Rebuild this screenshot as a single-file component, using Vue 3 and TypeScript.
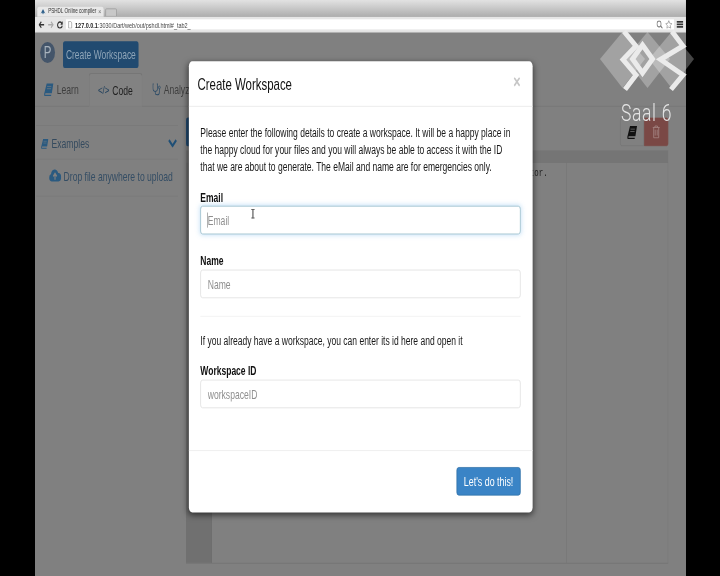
<script setup lang="ts">
const tabs = [
  { label: 'Learn', icon: 'book', active: false },
  { label: 'Code', icon: 'code', active: true },
  { label: 'Analyze', icon: 'steth', active: false },
]
</script>

<template>
  <div class="stage">
    <div class="screen">
      <header class="chrome">
        <div class="tabbar">
          <div class="tab">
            <svg class="favicon" viewBox="0 0 12 12"><path d="M1 9 6 2l5 7-3-2-2 3-2-3z" fill="#2d5f8a" /></svg>
            <span class="tab-title">PSHDL Online compiler</span>
            <span class="tab-close">×</span>
          </div>
          <div class="tab-new"></div>
        </div>
        <div class="toolbar">
          <svg class="nav-icon" viewBox="0 0 12 10"><path d="M11 5H2M5.500 1 1.500 5l4 4" fill="none" stroke="#333" stroke-width="2" /></svg>
          <svg class="nav-icon" viewBox="0 0 12 10"><path d="M1 5h9M6.500 1l4 4-4 4" fill="none" stroke="#aaa" stroke-width="2" /></svg>
          <svg class="nav-icon" viewBox="0 0 12 10"><path d="M10 3.500A4.500 4 0 1 0 10.500 6" fill="none" stroke="#333" stroke-width="2" /><path d="M11.500 0v5H7z" fill="#333" /></svg>
          <div class="urlbar">
            <svg class="page-icon" viewBox="0 0 8 10"><path d="M1 .5h4l2 2v7H1z" fill="#fff" stroke="#888" /></svg>
            <span class="url"><b>127.0.0.1</b>:3030/Dart/web/out/pshdl.html#_tab2_</span>
            <svg class="url-tool" viewBox="0 0 12 10"><circle cx="5" cy="4.500" r="3.500" fill="none" stroke="#777" stroke-width="1.200" /><path d="m8 7 3 3" stroke="#777" stroke-width="1.500" /></svg>
            <svg class="url-tool" viewBox="0 0 12 10"><path d="m6 .5 1.600 3.200 3.900.4-2.900 2.300.8 3.400L6 8.100 2.600 9.800l.8-3.400L.5 4.100l3.900-.4z" fill="#fff" stroke="#777" stroke-width=".8" /></svg>
          </div>
          <div class="menu-btn"><i></i><i></i><i></i></div>
        </div>
      </header>

      <main class="page">
        <div class="topline">
          <div class="avatar">P</div>
          <div class="primary-dim">Create Workspace</div>
        </div>

        <nav class="tabs">
          <div v-for="t in tabs" :key="t.label" class="nav-tab" :class="{ active: t.active }">
            <svg v-if="t.icon === 'book'" class="icon-book" viewBox="0 0 20 18"><path d="M6 1h13l-3 13H3.500L3 16h12l-.5 1.500H1.500L1 15z" fill="#2a5a80" /><path d="M7 5h8M6.500 8h8" stroke="#808080" /></svg>
            <span v-if="t.icon === 'code'" class="code-glyph">&lt;/&gt;</span>
            <svg v-if="t.icon === 'steth'" class="icon-steth" viewBox="0 0 20 18"><path d="M3 1H1.500v6c0 3 2.500 5 5 5s5-2 5-5V1H10M6.500 12v2c0 2 2 3 4 3s5-1 5-4V8" fill="none" stroke="#2a4a66" stroke-width="1.500" /><circle cx="15.500" cy="6" r="2" fill="none" stroke="#2a4a66" stroke-width="1.300" /></svg>
            <span>{{ t.label }}</span>
          </div>
        </nav>

        <div class="columns">
          <aside class="side">
            <div class="side-head">
              <svg class="icon-book small" viewBox="0 0 20 18"><path d="M6 1h13l-3 13H3.500L3 16h12l-.5 1.500H1.500L1 15z" fill="#2a5a80" /><path d="M7 5h8M6.500 8h8" stroke="#808080" /></svg>
              <span class="side-title">Examples</span>
              <svg class="chevron" viewBox="0 0 16 10"><path d="M2 1.500 8 8l6-6.500" fill="none" stroke="#1f4f76" stroke-width="3" /></svg>
            </div>
            <div class="side-row">
              <svg class="cloud" viewBox="0 0 22 16"><path d="M5 15a4.500 4.500 0 0 1-1-8.800A6.500 6.500 0 0 1 16.500 5 5 5 0 0 1 17 15z" fill="#2a5a80" /><path d="M11 13V7M8 9l3-3.500L14 9" fill="none" stroke="#808080" stroke-width="2" /></svg>
              <span>Drop file anywhere to upload</span>
            </div>
          </aside>

          <section class="editor">
            <div class="editor-tools">
              <div class="tool-sliver"></div>
              <div class="tool-group">
                <div class="tool-btn">
                  <svg class="tool-book" viewBox="0 0 20 18"><path d="M6 1h13l-3 13H3.500L3 16h12l-.5 1.500H1.500L1 15z" fill="#111" /><path d="M7 5h8M6.500 8h8" stroke="#808080" /></svg>
                </div>
                <div class="tool-btn danger">
                  <svg class="tool-trash" viewBox="0 0 16 18"><path d="M1 3h14M5.500 3V1h5v2M3 3v14h10V3M6 6v8M10 6v8" fill="none" stroke="#a88a88" stroke-width="1.200" /></svg>
                </div>
              </div>
            </div>
            <div class="code-panel">
              <div class="code-head"></div>
              <div class="code-body">
                <div class="gutter"></div>
                <div class="code-text"><span>tor.</span></div>
                <div class="margin-col"></div>
              </div>
            </div>
          </section>
        </div>
      </main>

      <div class="modal">
        <div class="modal-head">
          <h4>Create Workspace</h4>
          <span class="close">×</span>
        </div>
        <div class="modal-body">
          <p class="intro">Please enter the following details to create a workspace. It will be a happy place in the happy cloud for your files and you will always be able to access it with the ID that we are about to generate. The eMail and name are for emergencies only.</p>
          <label class="field first">
            <span>Email</span>
            <span class="input-wrap">
              <input class="focused" placeholder="Email" />
              <i class="caret"></i>
              <i class="ibeam"></i>
            </span>
          </label>
          <label class="field">
            <span>Name</span>
            <input placeholder="Name" />
          </label>
          <hr />
          <p class="hint">If you already have a workspace, you can enter its id here and open it</p>
          <label class="field id">
            <span>Workspace ID</span>
            <input placeholder="workspaceID" />
          </label>
        </div>
        <div class="modal-foot">
          <button class="go">Let's do this!</button>
        </div>
      </div>
    </div>

    <div class="watermark">
      <svg class="logo" viewBox="598 30 100 62">
        <g fill="#fff" fill-opacity=".27">
          <path d="M600 59 622.500 32 645 59 622.500 88z" />
          <path d="M625 59 647.500 32 670 59 647.500 88z" />
          <path d="M649 59 671.500 32 694 59 671.500 88z" />
        </g>
        <g fill="none" stroke="#ebebeb" stroke-width="5">
          <path d="M624 31.500 636 46 623 59.500 636 75 625 89.500" />
          <path d="M642.500 45 652.500 59 642.500 73 632.500 59z" />
          <path d="M672 31.500 683 46 660.500 59.500 683 75 671 89.500" />
        </g>
      </svg>
      <div class="saal">Saal 6</div>
    </div>
  </div>
</template>

<style>
html, body { background: #000; margin: 0; }
</style>

<style scoped>
.stage {
  position: relative;
  width: 720px;
  height: 576px;
  overflow: hidden;
  background: #000;
  font-family: "Liberation Sans", Arial, sans-serif;
}
.screen {
  position: relative;
  width: 1138px;
  height: 686px;
  margin-left: 35px;
  display: flex;
  flex-direction: column;
  background: #808080;
  transform: scale(0.572, 0.84);
  transform-origin: 0 0;
  filter: blur(0.55px);
}

/* browser chrome */
.chrome { flex: none; height: 39px; display: flex; flex-direction: column; }
.tabbar {
  height: 20px;
  display: flex;
  align-items: flex-end;
  gap: 3px;
  padding-left: 4px;
  background: linear-gradient(#e2e2e2, #adadad);
}
.tab {
  width: 116px;
  height: 12px;
  display: flex;
  align-items: center;
  gap: 3px;
  padding: 0 4px;
  box-sizing: border-box;
  background: #e8e8e8;
  border-radius: 3px 3px 0 0;
}
.favicon { width: 12px; height: 10px; flex: none; }
.tab-title { font-size: 8px; line-height: 12px; color: #333; white-space: nowrap; flex: 1; }
.tab-close { font-size: 9px; line-height: 12px; color: #666; }
.tab-new { width: 18px; height: 8px; background: #c8c8c8; border: 1px solid #999; border-radius: 2px 2px 0 0; }
.toolbar {
  height: 19px;
  display: flex;
  align-items: center;
  gap: 5px;
  padding-left: 6px;
  background: #e6e6e6;
  border-bottom: 1px solid #bbb;
  box-sizing: border-box;
}
.nav-icon { width: 11px; height: 9px; flex: none; }
.urlbar {
  width: 1063px;
  height: 12px;
  display: flex;
  align-items: center;
  gap: 4px;
  padding: 0 3px;
  box-sizing: border-box;
  background: #fff;
}
.page-icon { width: 9px; height: 9px; flex: none; }
.url { flex: 1; font-size: 9.600px; color: #444; white-space: nowrap; }
.url b { color: #222; font-weight: 700; }
.url-tool { width: 12px; height: 10px; flex: none; }
.menu-btn { width: 11px; display: flex; flex-direction: column; gap: 1px; }
.menu-btn i { display: block; height: 2px; background: #333; }

/* dimmed page */
.page { flex: 1; display: flex; flex-direction: column; min-height: 0; background: #808080; color: #3e3e3e; font-size: 14px; }
.topline { height: 48px; display: flex; align-items: flex-start; gap: 14px; padding: 10px 0 0 9px; box-sizing: border-box; }
.avatar {
  width: 26px;
  height: 25px;
  margin-top: 1px;
  border-radius: 50%;
  background: #44556a;
  color: #a9b3bd;
  display: flex;
  align-items: center;
  justify-content: center;
  font-size: 20px;
}
.primary-dim {
  height: 32px;
  padding: 0 5px;
  display: flex;
  align-items: center;
  background: #214a70;
  border-radius: 3px;
  color: #8fa5b8;
  font-size: 14.800px;
  white-space: nowrap;
}
.tabs { height: 39px; display: flex; gap: 1px; border-bottom: 1px solid #767676; }
.nav-tab {
  height: 39px;
  padding: 0 16px;
  display: flex;
  align-items: center;
  gap: 4px;
  color: #3f3f3f;
  font-size: 15px;
  box-sizing: border-box;
}
.nav-tab:first-child { padding: 0 0 0 15px; width: 93px; gap: 5px; }
.nav-tab.active {
  width: 94px;
  height: 40px;
  padding: 0 15px;
  color: #1f1f1f;
  background: #828282;
  border: 1px solid #757575;
  border-bottom-color: #828282;
  border-radius: 4px 4px 0 0;
}
.icon-book { width: 18px; height: 17px; flex: none; }
.code-glyph { color: #23425e; font-size: 14px; margin-right: 1px; }
.icon-steth { width: 16px; height: 17px; flex: none; }

.columns { flex: 1; display: flex; min-height: 0; }
.side { width: 248px; margin-left: 2px; padding-top: 22px; flex: none; }
.side-head {
  height: 41px;
  display: flex;
  align-items: center;
  gap: 5px;
  padding: 2px 0 0 8px;
  border-top: 1px solid #797979;
  border-bottom: 1px solid #797979;
  box-sizing: border-box;
  color: #344a5e;
  font-size: 15px;
}
.icon-book.small { width: 14px; height: 14px; }
.side-title { flex: 1; }
.chevron { width: 17px; height: 11px; margin-right: 1px; }
.side-row {
  height: 44px;
  display: flex;
  align-items: center;
  gap: 4px;
  padding: 0 0 5px 22px;
  box-sizing: border-box;
  color: #344d64;
  font-size: 15px;
  border-bottom: 1px solid #797979;
  white-space: nowrap;
}
.cloud { width: 22px; height: 16px; flex: none; }
.editor { width: 843px; margin-left: 14px; padding-top: 13px; display: flex; flex-direction: column; flex: none; }
.editor-tools { height: 34px; display: flex; justify-content: space-between; flex: none; }
.tool-sliver { width: 40px; background: #214a70; border-radius: 3px; }
.tool-group { width: 84px; display: flex; }
.tool-btn { flex: 1; display: flex; align-items: center; justify-content: center; border: 1px solid #757575; border-radius: 3px 0 0 3px; }
.tool-btn.danger { background: #7a4845; border-color: #7a4845; border-radius: 0 3px 3px 0; }
.tool-book { width: 20px; height: 17px; }
.tool-trash { width: 14px; height: 18px; }
.code-panel { height: 491px; margin-top: 5px; display: flex; flex-direction: column; border-bottom: 1px solid #727272; flex: none; }
.code-head { height: 15px; background: #757575; flex: none; }
.code-body { flex: 1; display: flex; border-right: 1px solid #777; }
.gutter { width: 44px; background: #707070; border-right: 1px solid #6a6a6a; flex: none; }
.code-text {
  width: 620px;
  padding: 4px 0 0 556px;
  box-sizing: border-box;
  font-family: "Liberation Mono", monospace;
  font-size: 13px;
  color: #222;
  flex: none;
}
.margin-col { flex: 1; border-left: 1px solid #747474; }

/* modal */
.modal {
  position: absolute;
  left: 269px;
  top: 73px;
  width: 601px;
  height: 537px;
  display: flex;
  flex-direction: column;
  background: #fff;
  border-radius: 6px;
  box-shadow: 0 3px 9px rgba(0, 0, 0, 0.6);
  color: #181818;
  font-size: 14.900px;
  line-height: 20px;
}
.modal-head {
  height: 54px;
  flex: none;
  display: flex;
  align-items: center;
  justify-content: space-between;
  padding: 0 21px 0 15px;
  box-sizing: border-box;
  border-bottom: 1px solid #e8e8e8;
}
.modal-head h4 { margin: 0; font-size: 20px; font-weight: 400; color: #111; }
.close { font-size: 22px; font-weight: 700; color: #c6c6c6; margin-top: -4px; }
.modal-body { flex: 1; padding: 21px 21px 0 20px; box-sizing: border-box; }
.modal-body p { margin: 0; }
.intro { max-width: 552px; margin-bottom: 17px !important; }
.field { display: flex; flex-direction: column; font-weight: 700; color: #111; }
.field + .field { margin-top: 22px; }
.input-wrap { position: relative; display: block; }
input {
  display: block;
  width: 100%;
  height: 34px;
  padding: 0 12px;
  box-sizing: border-box;
  border: 1.500px solid #dcdcdc;
  border-radius: 4px;
  background: #fff;
  font: 400 15px "Liberation Sans", Arial, sans-serif;
  color: #555;
  outline: none;
}
input::placeholder { color: #8f8f8f; opacity: 1; }
input.focused { border-color: #8fb6c4; box-shadow: 0 0 8px rgba(102, 175, 233, 0.4); }
.caret { position: absolute; left: 12px; top: 8px; width: 1px; height: 18px; background: #777; }
.ibeam { position: absolute; left: 91px; top: 4px; width: 2px; height: 11px; background: #555; }
.ibeam::before, .ibeam::after { content: ""; position: absolute; left: -2px; width: 6px; height: 1px; background: #555; }
.ibeam::before { top: 0; }
.ibeam::after { bottom: 0; }
hr { margin: 21px 0 19px; border: 0; border-top: 1px solid #f0f0f0; }
.field.id { margin-top: 16px; }
.modal-foot {
  height: 74px;
  flex: none;
  display: flex;
  align-items: center;
  justify-content: flex-end;
  padding: 0 21px 2px 20px;
  box-sizing: border-box;
  border-top: 1.500px solid #ececec;
}
.go {
  width: 112px;
  height: 34px;
  padding: 0;
  border: 1px solid #2e6da4;
  border-radius: 4px;
  background: #3a84c6;
  color: #fff;
  font: 400 15.500px "Liberation Sans", Arial, sans-serif;
}

/* conference watermark */
.watermark {
  position: absolute;
  left: 598px;
  top: 30px;
  width: 100px;
  display: flex;
  flex-direction: column;
  align-items: center;
  gap: 11px;
}
.logo { width: 100px; height: 62px; display: block; }
.saal {
  color: #e4e4e4;
  font-family: Roboto, "Liberation Sans", sans-serif;
  font-weight: 300;
  font-size: 17.500px;
  line-height: 20px;
  letter-spacing: 0.700px;
  transform: scaleY(1.35);
  margin-left: -3px;
  white-space: nowrap;
}
</style>
